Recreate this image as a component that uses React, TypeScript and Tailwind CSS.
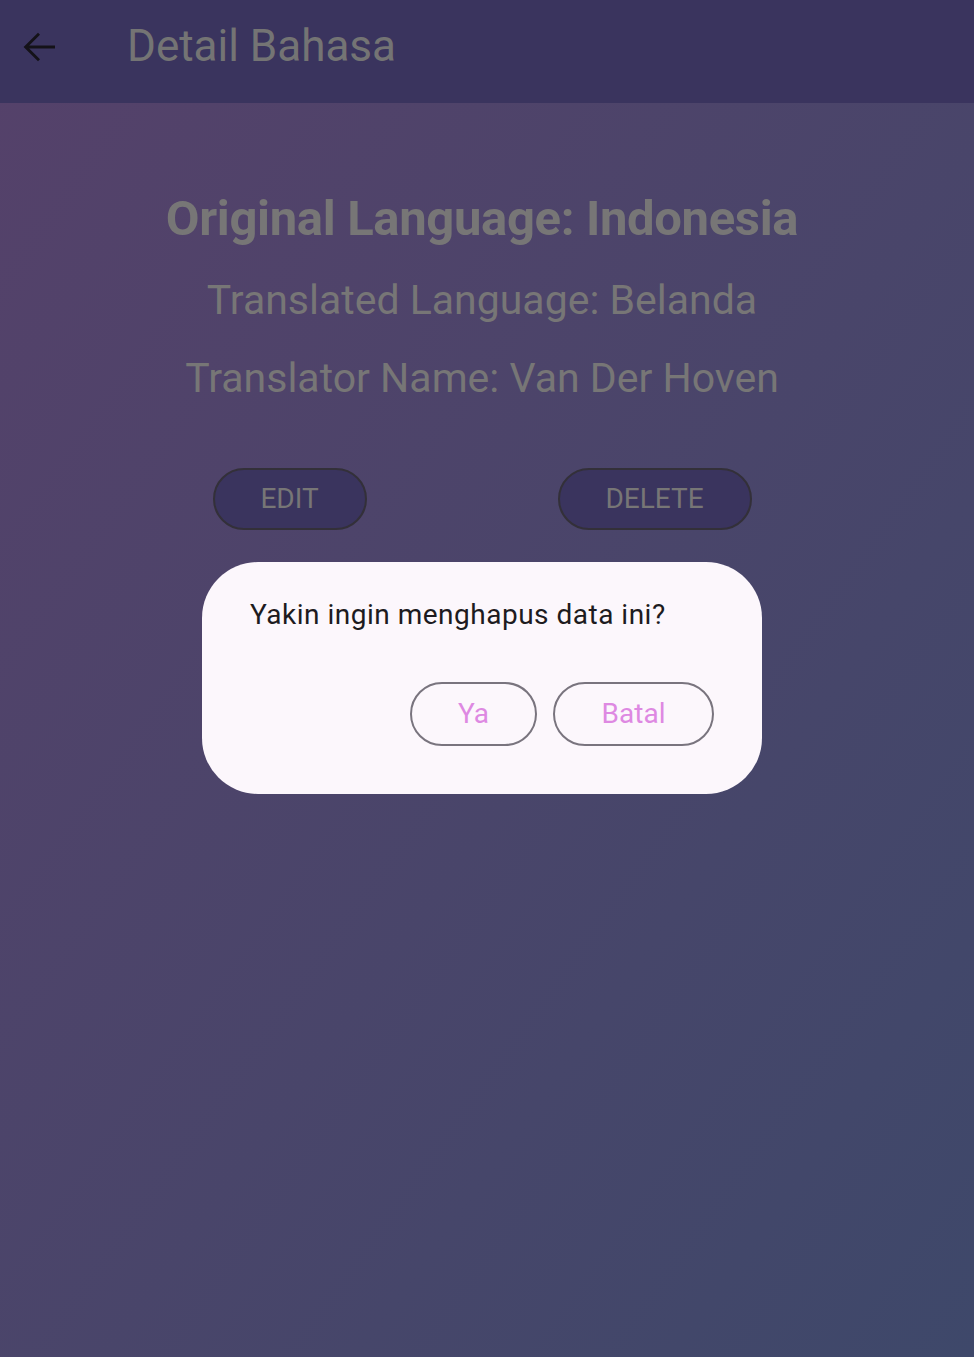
import type React from "react";

const ArrowBack: React.FC = () => (
	<svg width="48" height="48" viewBox="0 0 24 24" fill="none">
		<path d="M20 11.3H7.1l5.4-5.4-1-1L4.3 12l7.2 7.1 1-1-5.4-5.4H20v-1.4z" fill="#141218" />
	</svg>
);

export default function App() {
	return (
		<div
			className="relative w-[974px] h-[1357px] overflow-hidden bg-gradient-to-br from-[#55416a] to-[#3e486a]"
			style={{ fontFamily: "Roboto, 'Noto Sans', sans-serif" }}
		>
			{/* app bar */}
			<div className="h-[103px] bg-[#3a345e] flex items-center">
				<div className="w-[77px] flex justify-center pb-[10px]">
					<ArrowBack />
				</div>
				<h1 className="ml-[50px] text-[44px] text-[#747474] leading-none pb-[12px]">Detail Bahasa</h1>
			</div>

			{/* body */}
			<div className="flex flex-col items-center pr-[10px] pt-[86px]">
				<h2 className="text-[49px] font-bold text-[#777676] leading-[60px] tracking-[-0.35px]">
					Original Language: Indonesia
				</h2>
				<p className="mt-[26px] text-[41px] text-[#777676] leading-[50px]">Translated Language: Belanda</p>
				<p className="mt-[28px] text-[41px] text-[#777676] leading-[50px]">Translator Name: Van Der Hoven</p>

				<div className="mt-[65px] flex gap-[191px]">
					<button className="w-[154px] h-[62px] rounded-full bg-[#3a345e] border-2 border-[#333039] text-[28px] text-[#777676]">
						EDIT
					</button>
					<button className="w-[194px] h-[62px] rounded-full bg-[#3a345e] border-2 border-[#333039] text-[28px] text-[#777676]">
						DELETE
					</button>
				</div>
			</div>

			{/* dialog */}
			<div className="absolute left-[202px] top-[562px] w-[560px] h-[232px] rounded-[56px] bg-[#fcf7fc] px-[48px] pt-[33px]">
				<p className="text-[28px] text-[#1d1b20] leading-[40px] tracking-[0.5px]">Yakin ingin menghapus data ini?</p>
				<div className="mt-[47px] flex justify-end gap-[16px]">
					<button className="w-[127px] h-[64px] rounded-full border-2 border-[#79747e] text-[28px] text-[#de89e2]">
						Ya
					</button>
					<button className="w-[161px] h-[64px] rounded-full border-2 border-[#79747e] text-[28px] text-[#de89e2]">
						Batal
					</button>
				</div>
			</div>
		</div>
	);
}
